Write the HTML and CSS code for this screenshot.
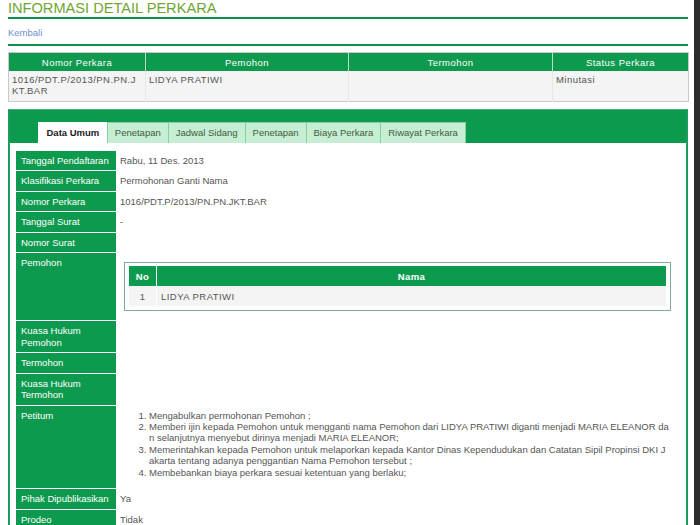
FILE: index.html
```html
<!DOCTYPE html>
<html lang="id">
<head>
<meta charset="utf-8">
<title>Informasi Detail Perkara</title>
<link rel="stylesheet" href="styles.css">
</head>
<body>
<div class="page">
  <h1 class="title">INFORMASI DETAIL PERKARA</h1>
  <div class="nav"><a class="back" href="#">Kembali</a></div>

  <table class="summary">
    <colgroup>
      <col class="c1"><col class="c2"><col class="c3"><col class="c4">
    </colgroup>
    <thead>
      <tr><th>Nomor Perkara</th><th>Pemohon</th><th>Termohon</th><th>Status Perkara</th></tr>
    </thead>
    <tbody>
      <tr><td>1016/PDT.P/2013/PN.PN.JKT.BAR</td><td>LIDYA PRATIWI</td><td></td><td>Minutasi</td></tr>
    </tbody>
  </table>

  <div class="panel">
    <div class="tabs">
      <span class="tab active">Data Umum</span>
      <span class="tab">Penetapan</span>
      <span class="tab">Jadwal Sidang</span>
      <span class="tab">Penetapan</span>
      <span class="tab">Biaya Perkara</span>
      <span class="tab">Riwayat Perkara</span>
    </div>
    <div class="content">
      <div class="detail">
        <div class="label">Tanggal Pendaftaran</div>
        <div class="value">Rabu, 11 Des. 2013</div>

        <div class="label">Klasifikasi Perkara</div>
        <div class="value">Permohonan Ganti Nama</div>

        <div class="label">Nomor Perkara</div>
        <div class="value">1016/PDT.P/2013/PN.PN.JKT.BAR</div>

        <div class="label">Tanggal Surat</div>
        <div class="value">-</div>

        <div class="label">Nomor Surat</div>
        <div class="value"></div>

        <div class="label">Pemohon</div>
        <div class="value">
          <div class="party">
            <table class="party-table">
              <thead><tr><th class="no">No</th><th>Nama</th></tr></thead>
              <tbody><tr><td class="no">1</td><td>LIDYA PRATIWI</td></tr></tbody>
            </table>
          </div>
        </div>

        <div class="label">Kuasa Hukum Pemohon</div>
        <div class="value"></div>

        <div class="label">Termohon</div>
        <div class="value"></div>

        <div class="label">Kuasa Hukum Termohon</div>
        <div class="value"></div>

        <div class="label">Petitum</div>
        <div class="value">
          <ol class="petitum">
            <li>Mengabulkan permohonan Pemohon ;</li>
            <li>Memberi ijin kepada Pemohon untuk mengganti nama Pemohon dari LIDYA PRATIWI diganti menjadi MARIA ELEANOR dan selanjutnya menyebut dirinya menjadi MARIA ELEANOR;</li>
            <li>Memerintahkan kepada Pemohon untuk melaporkan kepada Kantor Dinas Kependudukan dan Catatan Sipil Propinsi DKI Jakarta tentang adanya penggantian Nama Pemohon tersebut ;</li>
            <li>Membebankan biaya perkara sesuai ketentuan yang berlaku;</li>
          </ol>
        </div>

        <div class="label">Pihak Dipublikasikan</div>
        <div class="value">Ya</div>

        <div class="label">Prodeo</div>
        <div class="value">Tidak</div>

        <div class="label">Status Perkara</div>
        <div class="value">Minutasi</div>
      </div>
    </div>
  </div>
</div>
<div class="scrollbar"></div>
</body>
</html>
```

FILE: styles.css
```css
html, body {
  margin: 0;
  padding: 0;
  background: #ffffff;
}

body {
  font-family: "Liberation Sans", Arial, sans-serif;
  font-size: 9.5px;
  color: #555555;
}

.page {
  margin: 0 12px 0 8px;
}

.title {
  margin: 0;
  font-size: 14.6px;
  font-weight: normal;
  line-height: 17px;
  color: #6fa533;
  border-bottom: 2px solid #0f8f52;
}

.nav {
  padding: 8px 0 6px;
  line-height: 11px;
  border-bottom: 2px solid #0f8f52;
}

.back {
  color: #6b8fcf;
  text-decoration: none;
}

.summary {
  width: 100%;
  margin-top: 6px;
  border-collapse: collapse;
  border: 1px solid #c9c9c9;
  table-layout: fixed;
  letter-spacing: 0.45px;
}

.summary .c1 { width: 137px; }
.summary .c2 { width: 203px; }
.summary .c3 { width: 204px; }
.summary .c4 { width: 136px; }

.summary th {
  background: #0e9a4e;
  color: #ffffff;
  font-weight: normal;
  height: 18px;
  padding: 0 3px;
  line-height: 11px;
  border-left: 1px solid #b9dcc7;
  text-align: center;
}

.summary th:first-child { border-left: none; }

.summary td {
  background: #f4f4f4;
  height: 30px;
  padding: 4px 3px;
  box-sizing: border-box;
  line-height: 10.5px;
  vertical-align: top;
  word-break: break-all;
  border-left: 1px solid #e8e8e8;
  color: #555555;
}

.summary td:first-child { border-left: none; }

.panel {
  margin-top: 7px;
  border: 2px solid #1a9c5d;
  border-top: 1px solid #45b07c;
  border-bottom: none;
}

.tabs {
  background: #0e9a4e;
  padding: 12px 0 0 28px;
  display: flex;
  height: 21px;
}

.tab {
  display: block;
  height: 21px;
  box-sizing: border-box;
  padding: 0 7px;
  line-height: 20px;
  background: #c6eed2;
  color: #3d5c45;
  border-left: 1px solid #86cf9e;
  border-top: 1px solid #86cf9e;
}

.tab:last-child {
  border-right: 1px solid #86cf9e;
}

.tab.active {
  background: #ffffff;
  color: #222222;
  font-weight: bold;
  border-color: #ffffff;
  padding: 0 7.5px;
}

.content {
  background: #ffffff;
  padding: 8px 2px 0 6px;
}

.detail {
  display: grid;
  grid-template-columns: 100px 1fr;
  column-gap: 2px;
  row-gap: 1px;
}

.label {
  background: #0e9a4e;
  color: #ffffff;
  padding: 4px 5px;
  line-height: 11.5px;
}

.value {
  padding: 4px 2px;
  line-height: 11.5px;
  color: #555555;
}

.party {
  margin: 5px 11px 5px 4px;
  border: 1px solid #7fae9b;
  padding: 3px 4px 4px;
}

.party-table {
  width: 100%;
  border-collapse: collapse;
  letter-spacing: 0.45px;
}

.party-table th {
  background: #0e9a4e;
  color: #ffffff;
  font-weight: bold;
  height: 20px;
  padding: 0;
  line-height: 11px;
  text-align: center;
  border-left: 1px solid #ffffff;
}

.party-table td {
  background: #f4f4f4;
  height: 20px;
  padding: 0 4px;
  line-height: 11px;
  color: #555555;
  border-left: 1px solid #ffffff;
}

.party-table th:first-child,
.party-table td:first-child { border-left: none; }

.party-table .no {
  width: 27px;
  padding: 0;
  text-align: center;
}

.petitum {
  margin: 0 12px 6.5px 0;
  padding-left: 29px;
  line-height: 11.4px;
  word-break: break-all;
}

.scrollbar {
  position: fixed;
  top: 0;
  right: 0;
  width: 6px;
  height: 100%;
  background: #2c2c2c;
}
```
